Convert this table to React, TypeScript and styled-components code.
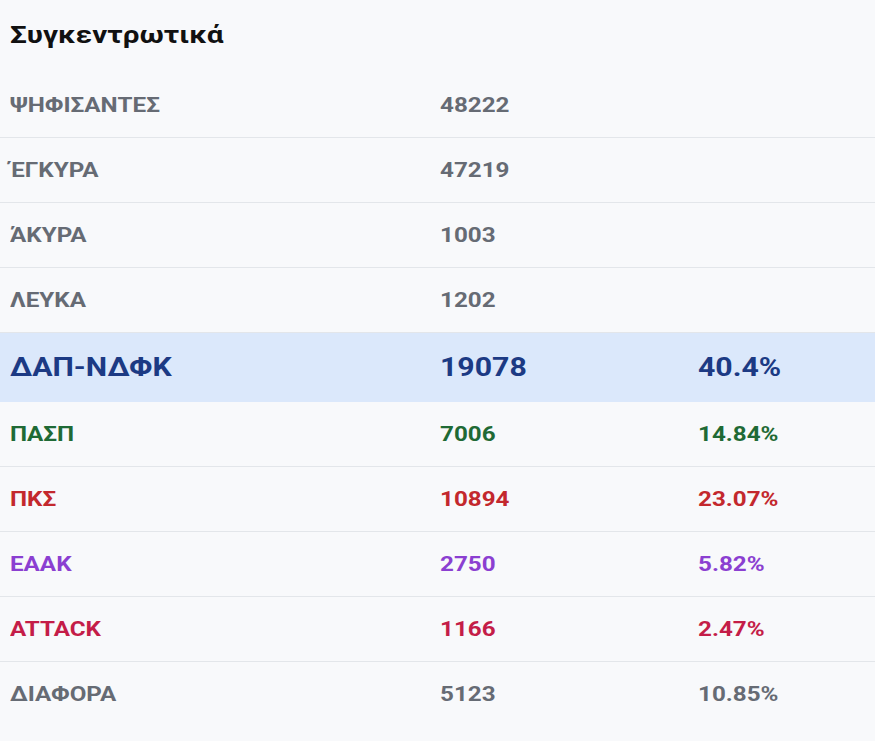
import React from "react";
import styled, { createGlobalStyle } from "styled-components";

const Global = createGlobalStyle`
  html, body { margin: 0; padding: 0; background: #f8f9fb; }
  body { font-family: Roboto, "Noto Sans", "Liberation Sans", sans-serif; }
`;

const Page = styled.div`
  width: 875px;
  min-height: 741px;
  background: #f8f9fb;
  box-sizing: border-box;
`;

const Title = styled.h2`
  margin: 0;
  padding: 18px 10px 0 10px;
  height: 73px;
  box-sizing: border-box;
  font-size: 24.5px;
  font-weight: 700;
  color: #111;
  line-height: 34px;
`;

const Wide = styled.span`
  display: inline-block;
  white-space: nowrap;
  transform: scaleX(1.21);
  transform-origin: left center;
`;

const Table = styled.div`
  display: flex;
  flex-direction: column;
`;

type Tone = "muted" | "blue" | "green" | "red" | "purple" | "crimson";

const toneColors: Record<Tone, string> = {
  muted: "#666b74",
  blue: "#1c3a84",
  green: "#1f6a35",
  red: "#c3282d",
  purple: "#8b3fd1",
  crimson: "#c41d48",
};

const Row = styled.div<{ $tone: Tone; $lead?: boolean; $last?: boolean }>`
  display: grid;
  grid-template-columns: 430px 258px 1fr;
  align-items: center;
  padding-left: 10px;
  height: ${(p) => (p.$lead ? "69px" : "64px")};
  background: ${(p) => (p.$lead ? "#dbe8fb" : "transparent")};
  border-bottom: ${(p) => (p.$last || p.$lead ? "none" : "1px solid #e3e6ea")};
  color: ${(p) => toneColors[p.$tone]};
  font-weight: 700;
  font-size: ${(p) => (p.$lead ? "25px" : "20px")};
`;

const Cell = styled.span`
  white-space: nowrap;
`;

type Item = { name: string; votes: string; pct?: string; tone: Tone; lead?: boolean };

const items: Item[] = [
  { name: "ΨΗΦΙΣΑΝΤΕΣ", votes: "48222", tone: "muted" },
  { name: "ΈΓΚΥΡΑ", votes: "47219", tone: "muted" },
  { name: "ΆΚΥΡΑ", votes: "1003", tone: "muted" },
  { name: "ΛΕΥΚΑ", votes: "1202", tone: "muted" },
  { name: "ΔΑΠ-ΝΔΦΚ", votes: "19078", pct: "40.4%", tone: "blue", lead: true },
  { name: "ΠΑΣΠ", votes: "7006", pct: "14.84%", tone: "green" },
  { name: "ΠΚΣ", votes: "10894", pct: "23.07%", tone: "red" },
  { name: "ΕΑΑΚ", votes: "2750", pct: "5.82%", tone: "purple" },
  { name: "ATTACK", votes: "1166", pct: "2.47%", tone: "crimson" },
  { name: "ΔΙΑΦΟΡΑ", votes: "5123", pct: "10.85%", tone: "muted" },
];

export default function App() {
  return (
    <Page>
      <Global />
      <Title>
        <Wide>Συγκεντρωτικά</Wide>
      </Title>
      <Table>
        {items.map((it, i) => (
          <Row key={it.name} $tone={it.tone} $lead={it.lead} $last={i === items.length - 1}>
            <Cell>
              <Wide>{it.name}</Wide>
            </Cell>
            <Cell>
              <Wide>{it.votes}</Wide>
            </Cell>
            <Cell>
              <Wide>{it.pct ?? ""}</Wide>
            </Cell>
          </Row>
        ))}
      </Table>
    </Page>
  );
}
